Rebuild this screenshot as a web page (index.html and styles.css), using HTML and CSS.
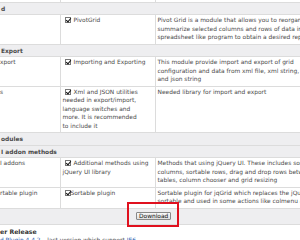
FILE: index.html
```
<!DOCTYPE html>
<html lang="en">
<head>
    <meta charset="UTF-8">
    <title>jqGrid Download</title>
    <link rel="stylesheet" href="styles.css">
</head>
<body>
    <table class="modules">
        <colgroup>
            <col class="col-name">
            <col class="col-file">
            <col class="col-desc">
        </colgroup>
        <tr class="filler"><td></td><td></td><td></td></tr>
        <tr class="group"><td colspan="3">d</td></tr>
        <tr>
            <td></td>
            <td><span class="check"></span>PivotGrid</td>
            <td class="desc">Pivot Grid is a module that allows you to reorganize and<br>summarize selected columns and rows of data in a<br>spreadsheet like program to obtain a desired report</td>
        </tr>
        <tr class="group"><td colspan="3">Export</td></tr>
        <tr>
            <td>xport</td>
            <td><span class="check"></span>Importing and Exporting</td>
            <td class="desc">This module provide import and export of grid<br>configuration and data from xml file, xml string,<br>and json string</td>
        </tr>
        <tr>
            <td>s</td>
            <td><span class="check"></span>Xml and JSON utilities<br>needed in export/import,<br>language switches and<br>more. It is recommended<br>to include it</td>
            <td class="desc">Needed library for import and export</td>
        </tr>
        <tr class="group"><td colspan="3">odules</td></tr>
        <tr class="group"><td colspan="3">I addon methods</td></tr>
        <tr>
            <td>I addons</td>
            <td><span class="check"></span>Additional methods using<br>jQuery UI library</td>
            <td class="desc">Methods that using jQuery UI. These includes sortable<br>columns, sortable rows, drag and drop rows between<br>tables, column chooser and grid resizing</td>
        </tr>
        <tr>
            <td>rtable plugin</td>
            <td><span class="check tight"></span>Sortable plugin</td>
            <td class="desc">Sortable plugin for jqGrid which replaces the jQuery UI<br>sortable and used in some actions like colmenu and grouping</td>
        </tr>
        <tr class="footer">
            <td colspan="3"><button class="download">Download</button></td>
        </tr>
    </table>

    <div class="highlight"></div>

    <h3 class="release">er Release</h3>
    <p class="older"><a href="#">d Plugin 4.4.2</a> &ndash; last version which support <a href="#">IE6</a></p>
</body>
</html>
```

FILE: styles.css
```
* {
    margin: 0;
    padding: 0;
    box-sizing: border-box;
}

body {
    font-family: 'DejaVu Sans', Verdana, sans-serif;
    font-size: 5.9px;
    line-height: 8.5px;
    color: #4a4a4a;
    background: #fff;
    overflow: hidden;
    width: 300px;
    height: 240px;
    position: relative;
}

.modules {
    border-collapse: collapse;
    table-layout: fixed;
    width: 360px;
}

.col-name { width: 60px; }
.col-file { width: 95px; }
.col-desc { width: 205px; }

.modules td {
    border: 1px solid #dcdcdc;
    padding: 1px 3px 2px 2px;
    vertical-align: top;
}

.modules td:first-child {
    padding-left: 0;
    border-left: none;
}

.modules td.desc {
    white-space: nowrap;
    overflow: hidden;
}

.modules .filler td {
    height: 2px;
    padding: 0;
    border-top: none;
}

.modules .group td {
    background: #eeeef0;
    font-weight: bold;
    padding: 2px 0 1px 1px;
}

.check {
    display: inline-block;
    width: 6px;
    height: 6px;
    border: 1px solid #777;
    background: #fff;
    margin: 0 3px 0 2px;
    vertical-align: -1px;
    position: relative;
}

.check::after {
    content: "";
    position: absolute;
    left: 1px;
    top: -1px;
    width: 2px;
    height: 4px;
    border: solid #111;
    border-width: 0 1.5px 1.5px 0;
    transform: rotate(40deg);
}

.check.tight {
    margin-right: 0;
}

.modules .footer td {
    background: #eeeef0;
    padding: 3px 0 4px 136px;
    line-height: 8px;
}

.download {
    display: block;
    font-family: 'DejaVu Sans', Verdana, sans-serif;
    font-size: 5.9px;
    line-height: 6px;
    padding: 0 2px;
    color: #111;
    background: linear-gradient(#fafafa, #dedede);
    border: 1px solid #888;
    border-radius: 1px;
}

.highlight {
    position: absolute;
    left: 127px;
    top: 202px;
    width: 52px;
    height: 25px;
    border: 2.5px solid #e0101e;
}

.release {
    font-size: 6.2px;
    line-height: 8.5px;
    font-weight: bold;
    color: #333;
    margin-top: 3px;
}

.older a {
    color: #2a5db0;
    text-decoration: none;
}
```
